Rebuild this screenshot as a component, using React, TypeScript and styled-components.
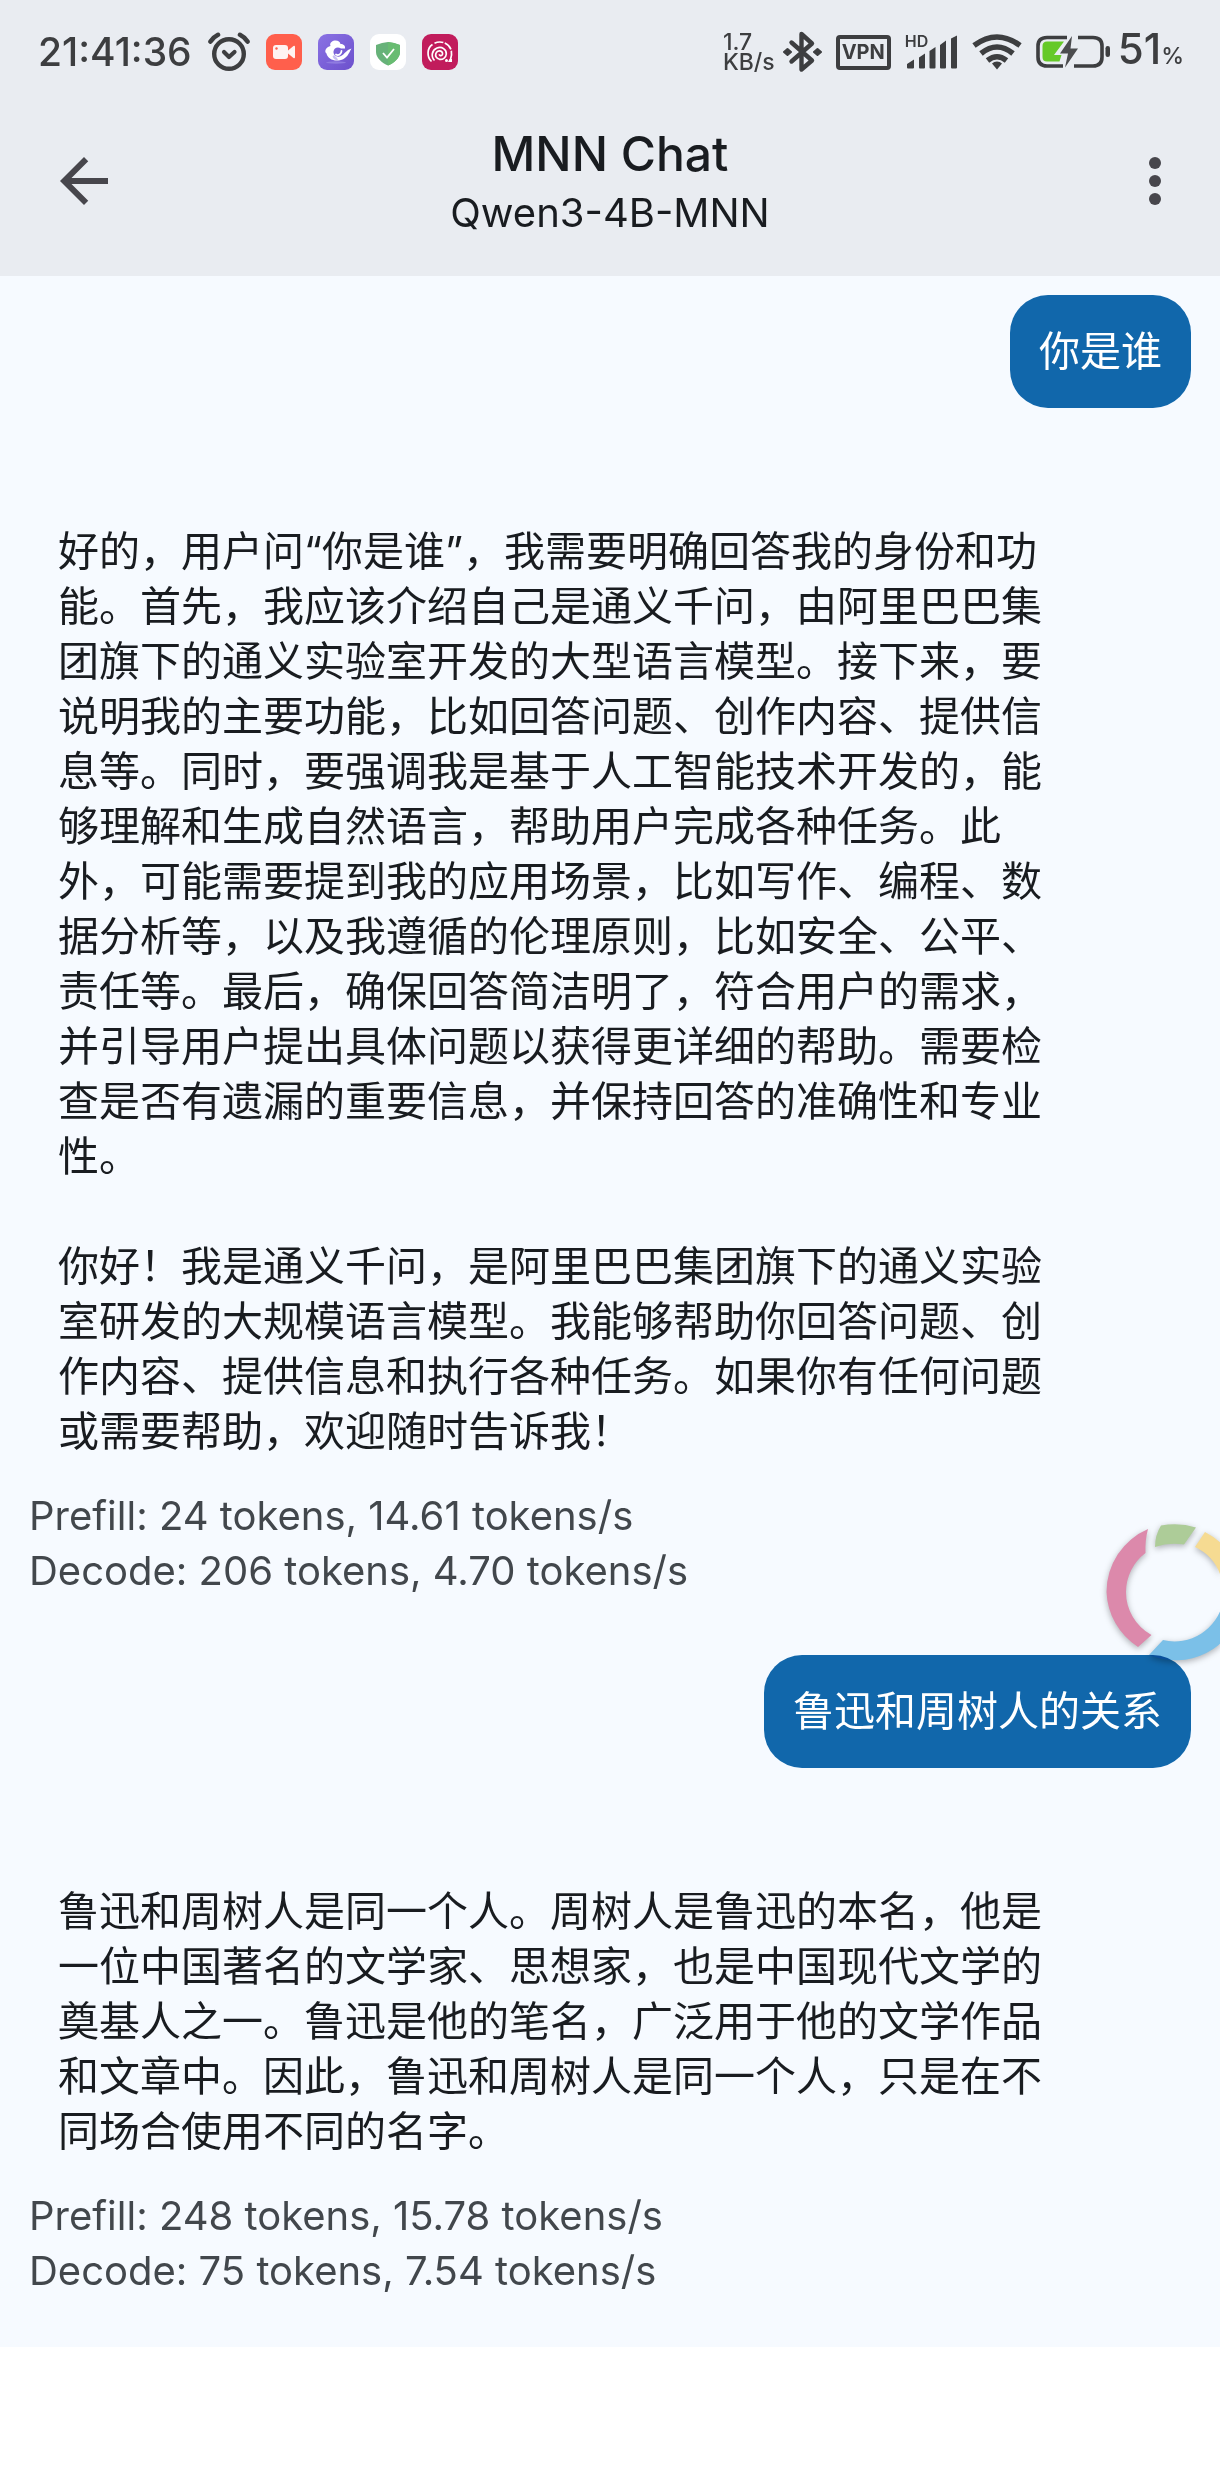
import React from "react";
import styled, { createGlobalStyle } from "styled-components";

const ink = "#3d3e40";

const GlobalStyle = createGlobalStyle`
  *, *::before, *::after { box-sizing: border-box; }
  body {
    margin: 0;
    background: #ffffff;
    font-family: Inter, "Noto Sans CJK SC", sans-serif;
    color: #191c20;
  }
`;

const Screen = styled.div`
  position: relative;
  overflow: hidden;
`;

const Header = styled.header`
  background: #e9ecf1;
  padding-bottom: 18px;
`;

const StatusBar = styled.div`
  display: flex;
  align-items: center;
  justify-content: space-between;
  height: 104px;
  padding: 0 36px 0 38px;
  color: ${ink};
`;

const StatusGroup = styled.div<{ $gap: number }>`
  display: flex;
  align-items: center;
  gap: ${(p) => p.$gap}px;
  svg { display: block; flex: none; }
`;

const Clock = styled.time`
  font-size: 39px;
  font-weight: 500;
  line-height: 48px;
`;

const NetSpeed = styled.div`
  font-size: 23px;
  font-weight: 500;
  line-height: 20px;
`;

const VpnBadge = styled.span`
  display: grid;
  place-items: center;
  width: 55px;
  height: 35px;
  border: 4px solid ${ink};
  border-radius: 4px;
  font-size: 20px;
  font-weight: 700;
  line-height: 24px;
`;

const Signal = styled.div`
  display: grid;
  svg, span { grid-area: 1 / 1; }
  span {
    align-self: start;
    font-size: 16px;
    font-weight: 600;
    line-height: 12px;
  }
`;

const BatteryLevel = styled.div`
  font-size: 42px;
  font-weight: 500;
  line-height: 48px;
  small { font-size: 23px; }
`;

const Toolbar = styled.div`
  display: flex;
  align-items: center;
  justify-content: space-between;
  height: 154px;
  padding: 0 29px 0 48px;
`;

const IconButton = styled.button`
  display: grid;
  place-items: center;
  width: 72px;
  height: 72px;
  padding: 0;
  border: 0;
  background: none;
  color: #47464c;
  cursor: pointer;
  svg { display: block; }
`;

const Titles = styled.div`
  flex: 1;
  padding: 4px 19px 0 0;
  text-align: center;
`;

const Title = styled.h1`
  margin: 0;
  font-size: 48px;
  font-weight: 500;
  line-height: 60px;
`;

const Subtitle = styled.p`
  margin: 0;
  font-size: 40px;
  line-height: 58px;
`;

const Chat = styled.main`
  display: flex;
  flex-direction: column;
  padding: 19px 29px 0;
  background: #f6faff;
`;

const UserBubble = styled.div`
  align-self: flex-end;
  padding: 29px;
  border-radius: 38px;
  background: #1167ab;
  color: #ffffff;
  font-size: 41px;
  line-height: 55px;
`;

const Reply = styled.article`
  margin: 116px 0 57px;
  &:last-child { margin-bottom: 49px; }
`;

const ReplyText = styled.p`
  margin: 0 0 55px;
  padding: 0 141px 0 29px;
  font-size: 41px;
  line-height: 55px;
  text-spacing-trim: space-all;
  &:last-of-type { margin-bottom: 0; }
`;

const Stats = styled.div`
  margin-top: 29px;
  color: #42474c;
  font-size: 40px;
  line-height: 55px;
`;

const FloatingRing = styled.svg`
  position: absolute;
  top: 1516px;
  right: 0;
  mix-blend-mode: multiply;
  filter: drop-shadow(0 2px 3px rgba(0, 0, 0, 0.3));
`;

const AlarmIcon = () => (
  <svg width="42" height="40" viewBox="0 0 42 40" fill="none" stroke={ink} strokeLinecap="round" strokeLinejoin="round">
    <circle cx="21" cy="22" r="14.8" strokeWidth="4.4" />
    <path d="M16 20l5 5 5.500-5" strokeWidth="4.200" />
    <path d="M2.500 9.500Q5.500 5 10 2.800M39.500 9.500Q36.500 5 32 2.800" strokeWidth="4.600" />
  </svg>
);

const VideoIcon = () => (
  <svg width="36" height="36" viewBox="0 0 36 36">
    <rect width="36" height="36" rx="9" fill="#ff5f4c" />
    <rect x="7" y="11" width="15" height="14" rx="3" fill="#fff3f1" />
    <path d="M22 16.500l5.500-4.500q1.500-.7 1.500 1v10q0 1.700-1.500 1l-5.500-4.500z" fill="#fff3f1" />
    <circle cx="10.500" cy="14.500" r="1.200" fill="#ff5f4c" />
  </svg>
);

const CloudBirdIcon = () => (
  <svg width="36" height="36" viewBox="0 0 36 36">
    <defs>
      <linearGradient id="violet" x1="0" y1="0" x2="1" y2="1">
        <stop offset="0" stopColor="#8a72e4" />
        <stop offset="1" stopColor="#6c50cc" />
      </linearGradient>
    </defs>
    <rect width="36" height="36" rx="9" fill="url(#violet)" />
    <ellipse cx="18" cy="28.500" rx="10" ry="1.200" fill="#8f7be0" />
    <path d="M12.500 12C11 8.500 15 6.500 17.500 6.500c3 0 4.500 1.500 5 3.500 3 0 5 1.500 4.500 4.500h-4C20 12.500 16 13.500 15.500 17.500c-.4 4 4 6.500 7.500 4.500 3.500-1.500 5-6 10.500-7.500-3 5-4 9.500-10.500 11.500-7 2-13.500-1.500-14.500-6.500-1.200-.8-1.600-2.500-.8-4 .9-1.700 2.800-3.200 4.800-3.500z" fill="#fff" />
    <path d="M23.500 17c0 3-3 5-5.500 3.500" fill="none" stroke="#fff" strokeWidth="1.800" strokeLinecap="round" />
    <path d="M16 21c2 2 4 3.500 4 5.500-2 0-4.500-1.500-5.500-4z" fill="#c9bff3" />
  </svg>
);

const ShieldIcon = () => (
  <svg width="36" height="36" viewBox="0 0 36 36">
    <rect width="36" height="36" rx="9" fill="#ffffff" />
    <path d="M18 8Q24 8.300 30 11v7c0 6-6 11-12 13.500C12 29 6 24 6 18v-7Q12 8.300 18 8z" fill="#67b279" />
    <path d="M18 8Q24 8.300 30 11v7c0 6-6 11-12 13.500z" fill="#68bc71" />
    <path d="M13 19l4 4.500 7-8.500" fill="none" stroke="#fff" strokeWidth="1.800" />
  </svg>
);

const SpiralIcon = () => (
  <svg width="36" height="36" viewBox="0 0 36 36">
    <rect width="36" height="36" rx="9" fill="#c11c5c" />
    <g fill="none" stroke="#fff" strokeWidth="1.700">
      <path d="M9.500 27.500C4.500 22.500 5 14 10.500 10.500" />
      <path d="M12.500 9.200C19 6.300 26.500 9 29 15.500c1 3 .8 7-1 11.500" strokeDasharray="9 1.500" />
      <path d="M12.500 26.500c-4-4-2.500-10.500 2.500-12.500 5-1.800 9.500 1.500 9.300 6-.3 4-3.800 6-6.800 5.300-2.800-.8-4.300-3-3.700-5.500.7-2.300 3-3.500 5-2.700 1.800.8 2.300 2.800 1.200 4-1 1-2.700.6-2.700-.8" />
    </g>
    <circle cx="24.500" cy="26.500" r="1.500" fill="#fff" />
    <path d="M27.500 25h2.500v3h-4z" fill="#fff" />
  </svg>
);

const BluetoothIcon = () => (
  <svg width="39" height="42" viewBox="0 0 39 42" fill="none" stroke={ink} strokeWidth="4.400" strokeLinejoin="round" strokeLinecap="round">
    <path d="M8.500 11.500L29 29.500 18.500 38.500V3L29 12.500 8.500 30.500" />
    <path d="M4.500 18l3.500 3-3.500 3-3.500-3zM34.500 18l3.500 3-3.500 3-3.500-3z" fill={ink} strokeWidth="2" />
  </svg>
);

const SignalIcon = () => (
  <svg width="53" height="34" viewBox="0 0 53 34" fill={ink}>
    <path d="M2 29l7-4.500v8q0 1-1 1H3q-1 0-1-1zM14 22.500l6-4v14q0 1-1 1h-4q-1 0-1-1zM24.500 16l6-4v20.500q0 1-1 1h-4q-1 0-1-1zM35 10l6-4.500v27q0 1-1 1h-4q-1 0-1-1zM46 3.500l6-3v32q0 1-1 1h-4q-1 0-1-1z" />
  </svg>
);

const WifiIcon = () => (
  <svg width="50" height="36" viewBox="0 0 50 36" fill="none" stroke={ink} strokeWidth="5.500">
    <path d="M2 11.500Q25-5.500 48 11.500" />
    <path d="M9 19.500Q25 6.500 41 19.500" />
    <path d="M15.500 26.500Q25 19 34.500 26.500" />
    <path d="M25 27.500q3 0 5 2l-5 6-5-6q2-2 5-2z" fill={ink} stroke="none" />
  </svg>
);

const BatteryIcon = () => (
  <svg width="74" height="34" viewBox="0 0 74 34">
    <path d="M31 2.500H11Q2 2.500 2 11v11q0 9 9 9h16M42 2.500h15q9 0 9 8.500v11q0 9-9 9H38" fill="none" stroke={ink} strokeWidth="3.600" />
    <path d="M11 6.500h17L18 20h7.500l-2 6.500H11q-4.500 0-4.500-4.500V11q0-4.500 4.500-4.500z" fill="#65c928" />
    <path d="M36 1L24 18.500h8L29 32.500 42 13.500h-7.500z" fill="#4b4c4e" />
    <rect x="69.500" y="11" width="4.500" height="11" rx="2.200" fill={ink} />
  </svg>
);

const BackIcon = () => (
  <svg width="72" height="72" viewBox="0 0 24 24" fill="currentColor">
    <path d="M20 11H7.830l5.590-5.590L12 4l-8 8 8 8 1.410-1.410L7.830 13H20v-2z" />
  </svg>
);

const MoreIcon = () => (
  <svg width="72" height="72" viewBox="0 0 24 24" fill="currentColor">
    <circle cx="12" cy="6" r="2" />
    <circle cx="12" cy="12" r="2" />
    <circle cx="12" cy="18" r="2" />
  </svg>
);

const Ring = () => (
  <FloatingRing width="118" height="156" viewBox="0 0 118 156" aria-hidden="true">
    <path d="M46 13A68.500 68.500 0 0 0 4.500 76A68.500 68.500 0 0 0 36 131L49.500 119A49 49 0 0 1 24 76A49 49 0 0 1 43.500 37Q43 24 46 13z" fill="#e48cab" />
    <path d="M53 31Q53 19 59 9.500Q77 6 94 11.500L82 28.500Q67 26 53 31z" fill="#b4d098" />
    <path d="M103 16A67 67 0 0 1 136 55L119 61A49 49 0 0 0 93 31z" fill="#ffe092" />
    <path d="M47 139A68.500 68.500 0 0 0 140 92L121 86A49.500 49.500 0 0 1 61 124z" fill="#80c4e8" />
  </FloatingRing>
);

type Turn = { question: string; answer: string[]; prefill: string; decode: string };

const turns: Turn[] = [
  {
    question: "你是谁",
    answer: [
      "好的，用户问“你是谁”，我需要明确回答我的身份和功能。首先，我应该介绍自己是通义千问，由阿里巴巴集团旗下的通义实验室开发的大型语言模型。接下来，要说明我的主要功能，比如回答问题、创作内容、提供信息等。同时，要强调我是基于人工智能技术开发的，能够理解和生成自然语言，帮助用户完成各种任务。此外，可能需要提到我的应用场景，比如写作、编程、数据分析等，以及我遵循的伦理原则，比如安全、公平、责任等。最后，确保回答简洁明了，符合用户的需求，并引导用户提出具体问题以获得更详细的帮助。需要检查是否有遗漏的重要信息，并保持回答的准确性和专业性。",
      "你好！我是通义千问，是阿里巴巴集团旗下的通义实验室研发的大规模语言模型。我能够帮助你回答问题、创作内容、提供信息和执行各种任务。如果你有任何问题或需要帮助，欢迎随时告诉我！",
    ],
    prefill: "Prefill: 24 tokens, 14.61 tokens/s",
    decode: "Decode: 206 tokens, 4.70 tokens/s",
  },
  {
    question: "鲁迅和周树人的关系",
    answer: [
      "鲁迅和周树人是同一个人。周树人是鲁迅的本名，他是一位中国著名的文学家、思想家，也是中国现代文学的奠基人之一。鲁迅是他的笔名，广泛用于他的文学作品和文章中。因此，鲁迅和周树人是同一个人，只是在不同场合使用不同的名字。",
    ],
    prefill: "Prefill: 248 tokens, 15.78 tokens/s",
    decode: "Decode: 75 tokens, 7.54 tokens/s",
  },
];

export default function App() {
  return (
    <>
      <GlobalStyle />
      <Screen lang="zh-CN">
        <Header>
          <StatusBar>
            <StatusGroup $gap={16}>
              <Clock>21:41:36</Clock>
              <AlarmIcon />
              <VideoIcon />
              <CloudBirdIcon />
              <ShieldIcon />
              <SpiralIcon />
            </StatusGroup>
            <StatusGroup $gap={14}>
              <StatusGroup $gap={8}>
                <NetSpeed>
                  <div>1.7</div>
                  <div>KB/s</div>
                </NetSpeed>
                <BluetoothIcon />
              </StatusGroup>
              <VpnBadge>VPN</VpnBadge>
              <Signal>
                <SignalIcon />
                <span>HD</span>
              </Signal>
              <WifiIcon />
              <StatusGroup $gap={8}>
                <BatteryIcon />
                <BatteryLevel>
                  51<small>%</small>
                </BatteryLevel>
              </StatusGroup>
            </StatusGroup>
          </StatusBar>
          <Toolbar>
            <IconButton type="button" aria-label="返回">
              <BackIcon />
            </IconButton>
            <Titles>
              <Title>MNN Chat</Title>
              <Subtitle>Qwen3-4B-MNN</Subtitle>
            </Titles>
            <IconButton type="button" aria-label="更多">
              <MoreIcon />
            </IconButton>
          </Toolbar>
        </Header>
        <Chat>
          {turns.map((turn) => (
            <React.Fragment key={turn.question}>
              <UserBubble>{turn.question}</UserBubble>
              <Reply>
                {turn.answer.map((text) => (
                  <ReplyText key={text}>{text}</ReplyText>
                ))}
                <Stats>
                  <div>{turn.prefill}</div>
                  <div>{turn.decode}</div>
                </Stats>
              </Reply>
            </React.Fragment>
          ))}
        </Chat>
        <Ring />
      </Screen>
    </>
  );
}
